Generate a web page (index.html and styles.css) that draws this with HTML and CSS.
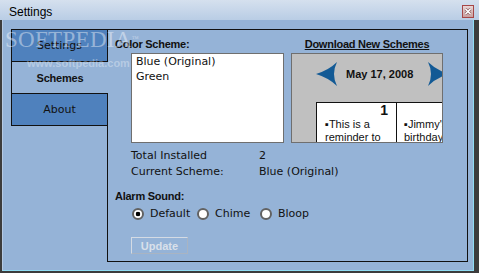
FILE: index.html
```html
<!DOCTYPE html>
<html lang="en">
<head>
    <meta charset="UTF-8">
    <title>Settings</title>
    <link rel="stylesheet" href="styles.css">
</head>
<body>
    <div class="window">
        <div class="titlebar">
            <span class="title">Settings</span>
            <span class="close">
                <svg width="12" height="13" viewBox="0 0 12 13">
                    <path d="M3.5 4 L8.5 9 M8.5 4 L3.5 9" stroke="#8a5a5a" stroke-width="3"/>
                    <path d="M3.5 4 L8.5 9 M8.5 4 L3.5 9" stroke="#fff" stroke-width="1.6"/>
                </svg>
            </span>
        </div>

        <div class="frame">
            <div class="client">
                <div class="tabs">
                    <div class="tab tab-first">Settings</div>
                    <div class="tab tab-active">Schemes</div>
                    <div class="tab tab-last">About</div>
                    <div class="tab-fill"></div>
                </div>

                <div class="panel">
                    <div class="schemes">
                        <div class="scheme-list">
                            <div class="label">Color Scheme:</div>
                            <ul class="listbox">
                                <li>Blue (Original)</li>
                                <li>Green</li>
                            </ul>
                        </div>

                        <div class="scheme-preview">
                            <a class="download" href="#">Download New Schemes</a>
                            <div class="preview">
                                <div class="cal-head">
                                    <svg class="arrow" width="21" height="24" viewBox="0 0 21 24">
                                        <path d="M21 0 Q13 8 0 12 Q13 16 21 24 Q15 12 21 0 Z" fill="#135a95"/>
                                    </svg>
                                    <span class="cal-title">May 17, 2008</span>
                                    <svg class="arrow arrow-right" width="21" height="24" viewBox="0 0 21 24">
                                        <path d="M0 0 Q8 8 21 12 Q8 16 0 24 Q6 12 0 0 Z" fill="#135a95"/>
                                    </svg>
                                </div>
                                <div class="cal-days">
                                    <div class="day">
                                        <div class="day-num">1</div>
                                        <div class="day-note">▪This is a reminder to call Mom</div>
                                    </div>
                                    <div class="day day-next">
                                        <div class="day-num">2</div>
                                        <div class="day-note">▪Jimmy's birthday</div>
                                    </div>
                                </div>
                            </div>
                        </div>
                    </div>

                    <div class="info">
                        <span>Total Installed</span><span>2</span>
                        <span>Current Scheme:</span><span>Blue (Original)</span>
                    </div>

                    <div class="label label-alarm">Alarm Sound:</div>
                    <div class="radios">
                        <label class="option"><span class="radio radio-on"></span>Default</label>
                        <label class="option"><span class="radio"></span>Chime</label>
                        <label class="option"><span class="radio"></span>Bloop</label>
                    </div>

                    <button class="btn-update" disabled>Update</button>
                </div>
            </div>
        </div>

        <div class="watermark">
            <div class="wm-big">SOFTPEDIA<sup>™</sup></div>
            <div class="wm-small">www.softpedia.com</div>
        </div>
    </div>
</body>
</html>
```

FILE: styles.css
```css
body {
    margin: 0;
    background: #3c3c3c;
    font-family: "DejaVu Sans", sans-serif;
    font-size: 11px;
    color: #111;
}

.window {
    position: relative;
    width: 479px;
    height: 273px;
    overflow: hidden;
}

.titlebar {
    height: 20px;
    box-sizing: border-box;
    display: flex;
    align-items: flex-start;
    justify-content: space-between;
    padding: 5px 5px 0 9px;
    background: linear-gradient(to bottom, #d5e0ee, #b9cde5);
}

.title {
    font-family: "Liberation Sans", sans-serif;
    font-size: 12px;
    line-height: 14px;
    color: #000;
}

.close {
    width: 12px;
    height: 13px;
    box-sizing: border-box;
    border: 1px solid #a64646;
    background: linear-gradient(to bottom, #e9d6d6, #c99f9f);
    display: flex;
}

.close svg {
    margin: -1px;
}

.frame {
    height: 253px;
    box-sizing: border-box;
    padding: 0 5px 2px 2px;
    background: #3c3c3c;
}

.client {
    width: 472px;
    height: 251px;
    box-sizing: border-box;
    display: flex;
    align-items: flex-start;
    padding: 9px 0 0 8px;
    background: #95b3d7;
    border-left: 1px solid #b5c9e2;
    border-right: 1px solid #8fdcf3;
    border-bottom: 1px solid #8fdcf3;
}

/* tabs */
.tabs {
    width: 97px;
    height: 233px;
    display: flex;
    flex-direction: column;
}

.tab {
    box-sizing: border-box;
    display: flex;
    align-items: center;
    justify-content: center;
    border-left: 1px solid #111;
    background: #4f81bd;
}

.tab-first, .tab-last {
    height: 33px;
    border: 1px solid #111;
}

.tab-active {
    height: 31px;
    background: #95b3d7;
    font-family: "Liberation Sans", sans-serif;
    font-weight: bold;
    letter-spacing: -0.2px;
}

.tab-fill {
    flex: 1;
    border-right: 1px solid #111;
}

/* panel */
.panel {
    width: 360px;
    height: 233px;
    box-sizing: border-box;
    padding: 7px 0 0 7px;
    border: 1px solid #111;
    border-left: none;
}

.label {
    font-family: "Liberation Sans", sans-serif;
    font-weight: bold;
    letter-spacing: -0.25px;
    line-height: 14px;
}

.schemes {
    display: flex;
}

.listbox {
    list-style: none;
    margin: 2px 0 0 16px;
    padding: 0 0 0 4px;
    width: 153px;
    height: 90px;
    box-sizing: border-box;
    border: 1px solid #6f6f6f;
    background: #fff;
    line-height: 15px;
}

.scheme-preview {
    margin-left: 7px;
    width: 152px;
    display: flex;
    flex-direction: column;
    align-items: center;
}

.download {
    font-family: "Liberation Sans", sans-serif;
    font-weight: bold;
    letter-spacing: -0.25px;
    line-height: 14px;
    color: #111;
    text-decoration: underline;
}

.preview {
    margin-top: 2px;
    width: 152px;
    height: 90px;
    box-sizing: border-box;
    border: 1px solid #6f6f6f;
    background: #c0c0c0;
    overflow: hidden;
}

.cal-head {
    display: flex;
    align-items: center;
    padding: 8px 0 0 24px;
}

.arrow {
    flex-shrink: 0;
}

.cal-title {
    flex-shrink: 0;
    margin-left: 9px;
    width: 67px;
    font-family: "Liberation Sans", sans-serif;
    font-weight: bold;
    line-height: 14px;
    white-space: nowrap;
}

.arrow-right {
    margin-left: 15px;
}

.cal-days {
    display: flex;
    margin-top: 16px;
    padding-left: 24px;
}

.day {
    flex-shrink: 0;
    width: 81px;
    height: 60px;
    box-sizing: border-box;
    border: 1px solid #111;
    background: #fff;
    padding: 0 8px;
    font-family: "Liberation Sans", sans-serif;
}

.day-next {
    width: 80px;
    border-left: none;
    padding-left: 7px;
}

.day-num {
    text-align: right;
    font-size: 14px;
    font-weight: bold;
    line-height: 12px;
    margin-top: 1px;
}

.day-note {
    margin-top: 2px;
    line-height: 13px;
}

.info {
    display: grid;
    grid-template-columns: 128px auto;
    margin: 5px 0 0 16px;
    line-height: 16px;
}

.label-alarm {
    margin-top: 9px;
}

.radios {
    display: grid;
    grid-template-columns: 65px 63px auto;
    margin: 3px 0 0 17px;
    line-height: 15px;
}

.option {
    display: flex;
    align-items: center;
    gap: 6px;
}

.radio {
    width: 12px;
    height: 12px;
    box-sizing: border-box;
    border: 2px solid #626262;
    border-radius: 50%;
    background: #fff;
}

.radio-on {
    background: radial-gradient(circle, #000 0 2px, #fff 2.6px);
}

.btn-update {
    display: block;
    margin: 16px 0 0 16px;
    width: 57px;
    height: 17px;
    padding: 0;
    border: 1px solid #d4dbe4;
    border-right-color: #a9b4c2;
    border-bottom-color: #a9b4c2;
    background: transparent;
    font-family: "Liberation Sans", sans-serif;
    font-size: 11px;
    font-weight: bold;
    color: #d9e0ea;
}

/* softpedia watermark */
.watermark {
    position: absolute;
    left: 5px;
    top: 28px;
    color: rgba(255, 255, 255, 0.42);
    pointer-events: none;
}

.wm-big {
    font-family: "Liberation Serif", serif;
    font-size: 23px;
    line-height: 23px;
    letter-spacing: 0.3px;
}

.wm-big sup {
    font-size: 7px;
    vertical-align: top;
}

.wm-small {
    margin: 6px 0 0 22px;
    font-family: "Liberation Sans", sans-serif;
    font-size: 11px;
    font-weight: bold;
    line-height: 12px;
    color: rgba(255, 255, 255, 0.32);
}
```
